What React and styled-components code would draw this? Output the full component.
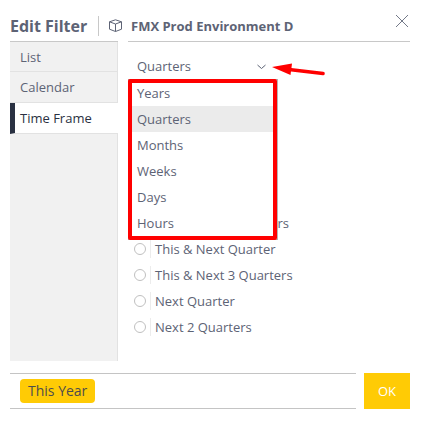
import React, { useState } from 'react';
import styled, { createGlobalStyle } from 'styled-components';

const GlobalStyle = createGlobalStyle`
  * {
    box-sizing: border-box;
  }

  body {
    margin: 0;
    background: #fff;
    color: #5d6375;
    font: 13px/18px "Open Sans", sans-serif;
  }

  button, select, input {
    font: inherit;
    color: inherit;
  }
`;

const Dialog = styled.section`
  position: relative;
  padding: 10px 12px 12px 10px;
`;

const Header = styled.header`
  display: flex;
  align-items: center;
  height: 31px;
`;

const Title = styled.h1`
  margin: 0;
  width: 88px;
  font-size: 16px;
  line-height: 20px;
  font-weight: 700;
  white-space: nowrap;
`;

const Source = styled.div`
  display: flex;
  align-items: center;
  gap: 8px;
  height: 20px;
  padding-left: 10px;
  border-left: 1px solid #c8c8c8;
`;

const SourceName = styled.h2`
  margin: 0;
  font-size: 13px;
  line-height: 20px;
  font-weight: 700;
`;

const CloseButton = styled.button`
  position: absolute;
  top: 12px;
  right: 12px;
  width: 16px;
  height: 18px;
  padding: 0;
  border: 0;
  background: none;
  cursor: pointer;

  svg {
    display: block;
    margin: auto;
  }
`;

const Body = styled.div`
  display: grid;
  grid-template-columns: 108px 1fr;
  column-gap: 10px;
`;

const Sidebar = styled.nav`
  border-top: 1px solid #c8c8c8;
  background: linear-gradient(to left, #e2e2e2 1px, #f1f1f1 1px);
`;

const Tab = styled.button`
  display: block;
  width: 100%;
  height: 31px;
  padding: 0 0 0 ${({ $active }) => ($active ? 5 : 10)}px;
  border: 0;
  border-left: ${({ $active }) => ($active ? '5px solid #2a3142' : '0')};
  border-bottom: 1px solid #e2e2e2;
  background: ${({ $active }) => ($active ? '#fff' : 'none')};
  color: ${({ $active }) => ($active ? '#2a3142' : 'inherit')};
  text-align: left;
  cursor: pointer;

  &:first-child {
    height: 30px;
  }
`;

const Content = styled.div`
  padding-top: 11px;
  border-top: 1px solid #c8c8c8;
`;

const Dropdown = styled.div`
  position: relative;
  width: 150px;
  height: 26px;
`;

const Select = styled.select`
  width: 100%;
  height: 26px;
  padding: 0 24px 0 9px;
  border: 0;
  background: none;
  appearance: none;
`;

const Chevron = styled.svg`
  position: absolute;
  top: 11px;
  right: 12px;
  pointer-events: none;
`;

const Menu = styled.ul`
  position: absolute;
  top: 26px;
  left: 0;
  z-index: 1;
  width: 150px;
  margin: 0;
  padding: 0 0 3px;
  border: 1px solid #b5b5b5;
  background: #fff;
  list-style: none;
`;

const MenuItem = styled.li`
  height: 26px;
  padding: 0 8px;
  line-height: 26px;
  background: ${({ $selected }) => ($selected ? '#ebebeb' : '#fff')};
  cursor: pointer;
`;

const Highlight = styled.div`
  position: absolute;
  top: 26px;
  left: 0;
  z-index: 2;
  width: 149px;
  height: 161px;
  border: 4px solid #f00;
  border-radius: 2px;
  pointer-events: none;
`;

const Arrow = styled.svg`
  position: absolute;
  top: 8px;
  left: 143px;
`;

const Options = styled.div`
  padding: 131px 0 21px 6px;
`;

const Option = styled.label`
  display: flex;
  align-items: center;
  height: 26px;
  white-space: nowrap;
`;

const Radio = styled.input`
  appearance: none;
  width: 12px;
  height: 12px;
  margin: 0;
  border: 1px solid #c0c0c0;
  border-radius: 50%;

  &:checked {
    background: #ffcb05;
  }
`;

const OptionText = styled.span`
  margin-left: 4px;
  padding-left: 4px;
  border-left: 1px solid #ececec;
`;

const Footer = styled.footer`
  display: flex;
  gap: 8px;
  margin-top: 12px;
`;

const Selection = styled.div`
  display: flex;
  flex: 1;
  align-items: center;
  height: 36px;
  padding: 0 10px;
  border: solid #c4c4c4;
  border-width: 1px 0;
`;

const Tag = styled.span`
  height: 24px;
  padding: 0 8px;
  border-radius: 4px;
  background: #ffcb05;
  color: #4d4d4d;
  font-size: 14px;
  line-height: 24px;
`;

const OkButton = styled.button`
  width: 46px;
  height: 36px;
  padding: 0;
  border: 0;
  background: #ffcb05;
  color: #fff;
  cursor: pointer;
`;

const tabs = ['List', 'Calendar', 'Time Frame'];
const units = ['Years', 'Quarters', 'Months', 'Weeks', 'Days', 'Hours'];
const ranges = [
  'This & Last 3 Quarters',
  'This & Next Quarter',
  'This & Next 3 Quarters',
  'Next Quarter',
  'Next 2 Quarters',
];

const CubeIcon = () => (
  <svg width="14" height="14" viewBox="0 0 14 14" fill="none" stroke="#5d6375" strokeLinejoin="round">
    <path d="M6.5 0.8 L12.5 2.8 V10.2 L6.5 12.5 L0.5 10.2 V2.8 Z M0.5 2.8 L6.5 5 L12.5 2.8 M6.5 5 V12.5" />
  </svg>
);

const App = () => {
  const [tab, setTab] = useState('Time Frame');
  const [unit, setUnit] = useState('Quarters');

  return (
    <>
      <GlobalStyle />
      <Dialog role="dialog" aria-label="Edit Filter">
        <Header>
          <Title>Edit Filter</Title>
          <Source>
            <CubeIcon />
            <SourceName>FMX Prod Environment D</SourceName>
          </Source>
          <CloseButton aria-label="Close">
            <svg width="14" height="14" viewBox="0 0 14 14" stroke="#737988">
              <path d="M1 1 L13 13 M13 1 L1 13" />
            </svg>
          </CloseButton>
        </Header>

        <Body>
          <Sidebar>
            {tabs.map((name) => (
              <Tab key={name} $active={name === tab} onClick={() => setTab(name)}>{name}</Tab>
            ))}
          </Sidebar>

          <Content>
            <Dropdown>
              <Select aria-label="Time unit" value={unit} onChange={(e) => setUnit(e.target.value)}>
                {units.map((name) => <option key={name}>{name}</option>)}
              </Select>
              <Chevron width="9" height="6" viewBox="0 0 9 6" fill="none" stroke="#5d6375">
                <path d="M0.5 1 L4.5 4.5 L8.5 1" />
              </Chevron>
              <Menu role="listbox" aria-label="Time unit">
                {units.map((name) => (
                  <MenuItem
                    key={name}
                    role="option"
                    aria-selected={name === unit}
                    $selected={name === unit}
                    onClick={() => setUnit(name)}
                  >
                    {name}
                  </MenuItem>
                ))}
              </Menu>
              <Highlight />
              <Arrow width="56" height="18" viewBox="0 0 56 18" fill="#f00">
                <path d="M1 6 L21 2.5 L19.5 14 Z" />
                <path d="M18 8.5 L52 12.5" stroke="#f00" strokeWidth="3.6" strokeLinecap="round" />
              </Arrow>
            </Dropdown>

            <Options role="radiogroup" aria-label="Range">
              {ranges.map((name) => (
                <Option key={name}>
                  <Radio type="radio" name="range" />
                  <OptionText>{name}</OptionText>
                </Option>
              ))}
            </Options>
          </Content>
        </Body>

        <Footer>
          <Selection>
            <Tag>This Year</Tag>
          </Selection>
          <OkButton>OK</OkButton>
        </Footer>
      </Dialog>
    </>
  );
};

export default App;
